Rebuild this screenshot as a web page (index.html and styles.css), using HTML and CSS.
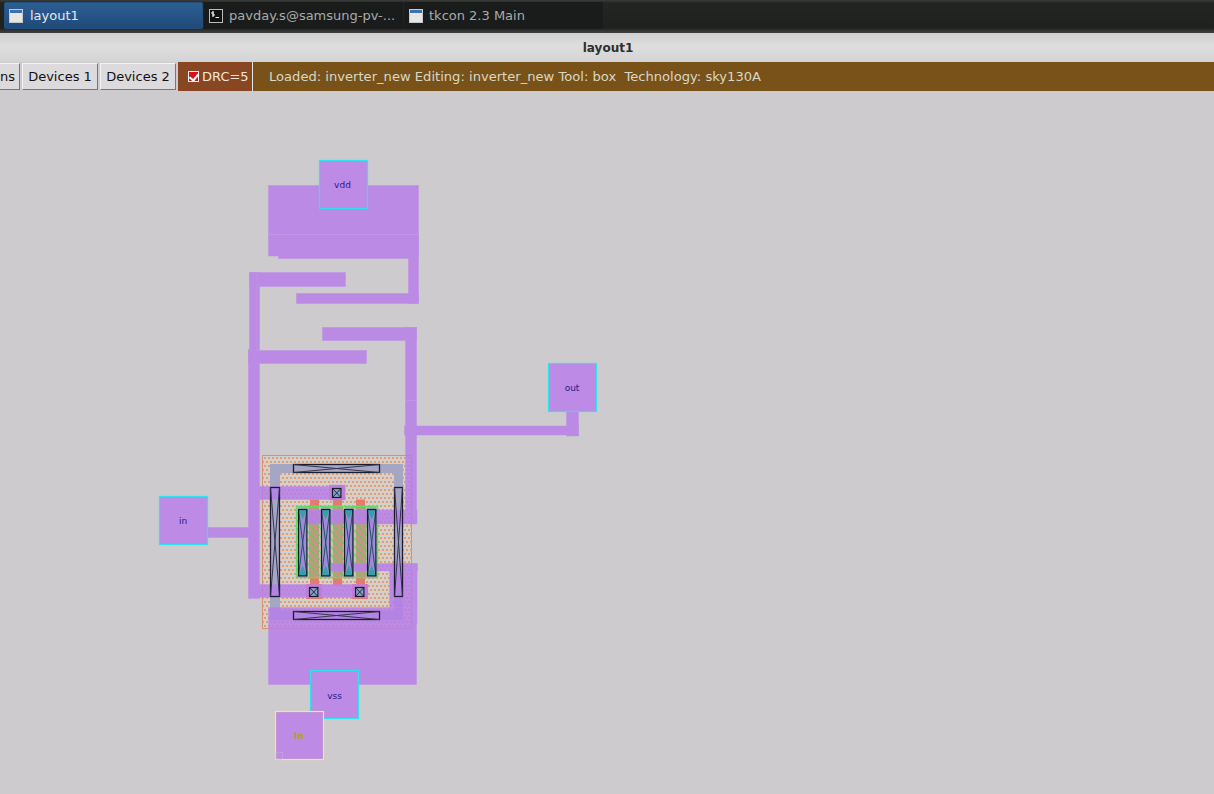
FILE: index.html
```html
<!DOCTYPE html>
<html lang="en">
<head>
  <meta charset="UTF-8">
  <title>layout1</title>
  <link rel="stylesheet" href="styles.css">
</head>
<body>
  <div class="taskbar">
    <div class="task active"><span class="win-icon"></span>layout1</div>
    <div class="task">
      <svg class="term-icon" width="14" height="14" viewBox="0 0 14 14">
        <rect x="0.5" y="0.5" width="13" height="13" fill="#111" stroke="#bbb"/>
        <path d="M5 3 H3 V5 H5 V7 H3 M4 2.5 V7.5 M6.5 8.5 H10" fill="none" stroke="#eee" stroke-width="1"/>
      </svg>
      pavday.s@samsung-pv-...
    </div>
    <div class="task"><span class="win-icon"></span>tkcon 2.3 Main</div>
  </div>

  <div class="titlebar">layout1</div>

  <div class="toolbar">
    <button class="tool-btn first">ns</button>
    <button class="tool-btn">Devices 1</button>
    <button class="tool-btn">Devices 2</button>
    <div class="drc"><span class="drc-check"></span>DRC=5</div>
    <div class="status">Loaded: inverter_new Editing: inverter_new Tool: box&nbsp; Technology: sky130A</div>
  </div>

  <svg class="canvas" viewBox="0 91 1214 703" width="1214" height="703">
    <defs>
      <pattern id="dots" width="4" height="8" patternUnits="userSpaceOnUse">
        <rect x="0" y="1" width="2" height="2" fill="#df9e74"/>
        <rect x="2" y="5" width="2" height="2" fill="#df9e74"/>
      </pattern>
      <pattern id="hatch" width="8" height="8" patternUnits="userSpaceOnUse">
        <path d="M0 0 L8 8" stroke="#58d058" stroke-width="1.4"/>
      </pattern>
      <g id="strip">
        <rect width="8.4" height="66.4" fill="#a08ad8"/>
        <path d="M0 0 H8.4 L4.2 10 Z M0 66.4 H8.4 L4.2 56 Z" fill="#35a0a8"/>
        <path d="M0 0 L8.4 66.4 M8.4 0 L0 66.4" stroke="#1e5560" stroke-width="1" fill="none"/>
        <rect width="8.4" height="66.4" fill="none" stroke="#12202c" stroke-width="1.2"/>
      </g>
      <g id="via">
        <rect width="8.4" height="9" fill="#8a9cc8"/>
        <path d="M0 0 L8.4 9 M8.4 0 L0 9" stroke="#16303c" stroke-width="1"/>
        <rect width="8.4" height="9" fill="none" stroke="#14202c" stroke-width="1.2"/>
      </g>
    </defs>

    <!-- nwell -->
    <rect class="nwell" x="262.5" y="455.5" width="149" height="173"/>
    <rect x="262.5" y="455.5" width="149" height="173" fill="url(#dots)"/>

    <!-- poly -->
    <g class="poly">
      <rect x="310" y="499.5" width="9" height="86"/>
      <rect x="333" y="499.5" width="9" height="86"/>
      <rect x="356" y="499.5" width="9" height="86"/>
      <rect x="329" y="485" width="16" height="15"/>
      <rect x="306" y="584" width="16" height="15"/>
      <rect x="352" y="584" width="16" height="15"/>
    </g>

    <!-- diffusion -->
    <rect class="diff" x="296.5" y="506.5" width="81" height="71"/>
    <g class="channel">
      <rect x="309" y="507" width="10" height="70"/>
      <rect x="333" y="507" width="10" height="70"/>
      <rect x="356" y="507" width="10" height="70"/>
    </g>
    <rect x="296.5" y="506.5" width="81" height="71" fill="url(#hatch)" opacity="0.7"/>

    <!-- local interconnect -->
    <g class="li">
      <rect x="270" y="464" width="133" height="9"/>
      <rect x="270" y="464" width="10" height="156"/>
      <rect x="394" y="464" width="9" height="156"/>
      <rect x="270" y="611" width="133" height="9"/>
      <rect x="298" y="507" width="9" height="71"/>
      <rect x="321" y="507" width="9" height="71"/>
      <rect x="345" y="507" width="9" height="71"/>
      <rect x="367" y="507" width="9" height="71"/>
    </g>

    <!-- metal1 -->
    <g class="metal">
      <rect x="268.5" y="185.5" width="150" height="49"/>
      <rect x="268.5" y="234.5" width="150" height="21.5"/>
      <rect x="278.5" y="234.5" width="140" height="24"/>
      <rect x="408.5" y="258" width="10" height="45.5"/>
      <rect x="296.5" y="293.5" width="122" height="10"/>
      <rect x="249.5" y="272.5" width="96" height="14"/>
      <rect x="249.5" y="272.5" width="10" height="80"/>
      <rect x="248.5" y="349.5" width="11" height="249"/>
      <rect x="248.5" y="350.5" width="118" height="13"/>
      <rect x="322.5" y="327.5" width="94" height="13"/>
      <rect x="405.5" y="327.5" width="11" height="196"/>
      <rect x="404.5" y="426" width="174" height="9"/>
      <rect x="566.5" y="405" width="12" height="31"/>
      <rect x="207" y="527.5" width="42" height="10"/>
      <rect x="250" y="486.5" width="95" height="13"/>
      <rect x="329" y="485" width="16" height="15"/>
      <rect x="250" y="584.5" width="118" height="13"/>
      <rect x="306" y="510" width="111" height="14"/>
      <rect x="331" y="563.5" width="86.5" height="7.5"/>
      <rect x="389.5" y="563.5" width="27.5" height="60"/>
      <rect x="268.5" y="607.5" width="148" height="77"/>
    </g>
    <path class="seam" d="M268.5 234.5 H418.5 M406 400.5 H416.5 M257 272.5 V350"/>

    <!-- contacts -->
    <g class="bar">
      <rect x="293.5" y="464.5" width="86" height="8"/>
      <path d="M293.5 464.5 L379.5 472.5 M379.5 464.5 L293.5 472.5"/>
      <rect x="293.5" y="611.5" width="86" height="8"/>
      <path d="M293.5 611.5 L379.5 619.5 M379.5 611.5 L293.5 619.5"/>
      <rect x="270.5" y="487.5" width="9" height="109"/>
      <path d="M270.5 487.5 L279.5 596.5 M279.5 487.5 L270.5 596.5"/>
      <rect x="394.5" y="487.5" width="8" height="109"/>
      <path d="M394.5 487.5 L402.5 596.5 M402.5 487.5 L394.5 596.5"/>
    </g>
    <use href="#strip" x="298.5" y="509.5"/>
    <use href="#strip" x="321.5" y="509.5"/>
    <use href="#strip" x="344.5" y="509.5"/>
    <use href="#strip" x="367.5" y="509.5"/>
    <use href="#via" x="332.5" y="488.5"/>
    <use href="#via" x="309.5" y="587.5"/>
    <use href="#via" x="355.5" y="587.5"/>

    <!-- pins -->
    <rect class="pad" x="319.5" y="160.5" width="48" height="48"/>
    <text class="pad-label" x="342.5" y="188">vdd</text>
    <rect class="pad" x="548.5" y="363.5" width="48" height="48"/>
    <text class="pad-label" x="572" y="391">out</text>
    <rect class="pad" x="159.5" y="496.5" width="48" height="48"/>
    <text class="pad-label" x="183" y="524">in</text>
    <rect class="pad" x="310.5" y="670.5" width="48" height="48"/>
    <text class="pad-label" x="334.5" y="699">vss</text>
    <rect class="pad selected" x="275.5" y="711.5" width="48" height="48"/>
    <rect class="pad-mark" x="276" y="752.5" width="6.5" height="6.5"/>
    <text class="pad-label selected-label" x="299" y="739">In</text>
  </svg>
</body>
</html>
```

FILE: styles.css
```css
* {
  box-sizing: border-box;
}

body {
  margin: 0;
  width: 1214px;
  height: 794px;
  overflow: hidden;
  background: #cdcbce;
  font-family: "DejaVu Sans", sans-serif;
  display: flex;
  flex-direction: column;
}

.taskbar {
  height: 33px;
  flex: none;
  display: flex;
  gap: 1px;
  padding: 2px 4px 3px;
  background: linear-gradient(#3a3c3a 0, #232523 3px, #1f211f 28px, #3c3c3c 32px);
}

.task {
  width: 199px;
  height: 27px;
  display: flex;
  align-items: center;
  gap: 6px;
  padding-left: 5px;
  font-size: 13px;
  color: #a9aba9;
  background: #1a1c1b;
  white-space: nowrap;
}

.task.active {
  gap: 7px;
  color: #e6e8ea;
  background: linear-gradient(#2d5f93, #1f4a79);
  border: 1px solid #234f7f;
  border-radius: 2px;
  padding-left: 4px;
}

.win-icon {
  width: 14px;
  height: 14px;
  background: linear-gradient(#3f6fb5 0, #3f6fb5 3px, #e6e6e2 3px);
  border: 1px solid #c4c8cc;
}

.term-icon {
  flex: none;
}

.titlebar {
  height: 29px;
  flex: none;
  display: flex;
  align-items: center;
  justify-content: center;
  padding-left: 2px;
  font-size: 12px;
  font-weight: bold;
  color: #2e2e2e;
  background: linear-gradient(#d0d0d0, #dedede 45%, #d4d3d5);
}

.toolbar {
  height: 29px;
  flex: none;
  display: flex;
  gap: 2px;
  background: #cdcbce;
}

.tool-btn {
  width: 76px;
  height: 27px;
  margin-top: 1px;
  padding: 0;
  font-family: inherit;
  font-size: 13px;
  color: #111;
  background: #dcdadd;
  border: 1px solid;
  border-color: #f4f4f4 #777 #777 #f4f4f4;
}

.tool-btn.first {
  width: 20px;
  border-left: none;
  text-align: left;
}

.drc {
  width: 75px;
  display: flex;
  align-items: center;
  gap: 3px;
  padding-left: 10px;
  font-size: 13px;
  color: #f0e6dc;
  background: #884722;
  border-right: 1px solid #e8e8e8;
}

.drc-check {
  width: 11px;
  height: 11px;
  border: 1px solid #eee;
  background: #d8101c;
  position: relative;
}

.drc-check::after {
  content: "";
  position: absolute;
  left: 2px;
  top: 0;
  width: 4px;
  height: 7px;
  border: solid #fff;
  border-width: 0 2px 2px 0;
  transform: rotate(40deg);
}

.status {
  flex: 1;
  margin-left: -2px;
  padding-left: 16px;
  display: flex;
  align-items: center;
  font-size: 13.1px;
  color: #d8d8c4;
  background: #79521a;
  white-space: nowrap;
}

.canvas {
  display: block;
  flex: none;
}

.nwell {
  fill: #d6d0cc;
  stroke: #d89070;
  stroke-width: 1;
}

.poly rect {
  fill: #e47a70;
}

.diff {
  fill: #c2c8ae;
  stroke: #68dc60;
  stroke-width: 1.6;
}

.channel rect {
  fill: #c09a80;
}

.li rect {
  fill: #a5a5c4;
}

.metal {
  opacity: 0.85;
}

.metal rect {
  fill: #b77fea;
  stroke: #bb88e8;
  stroke-width: 0.5;
}

.seam {
  fill: none;
  stroke: #c49ce6;
  stroke-width: 0.6;
}

.bar rect {
  fill: none;
  stroke: #1c1c30;
  stroke-width: 1.3;
}

.bar path {
  fill: none;
  stroke: #35354c;
  stroke-width: 1;
}

.pad {
  fill: #bd8ae6;
  stroke: #2ce4ec;
  stroke-width: 1.2;
}

.pad.selected {
  stroke: #f4f450;
}

.pad-mark {
  fill: none;
  stroke: #c9a8e6;
  stroke-width: 0.6;
}

.pad-label {
  font-family: "DejaVu Sans", sans-serif;
  font-size: 9px;
  fill: #2a1a88;
  text-anchor: middle;
}

.selected-label {
  font-weight: bold;
  fill: #b8a018;
}
```
